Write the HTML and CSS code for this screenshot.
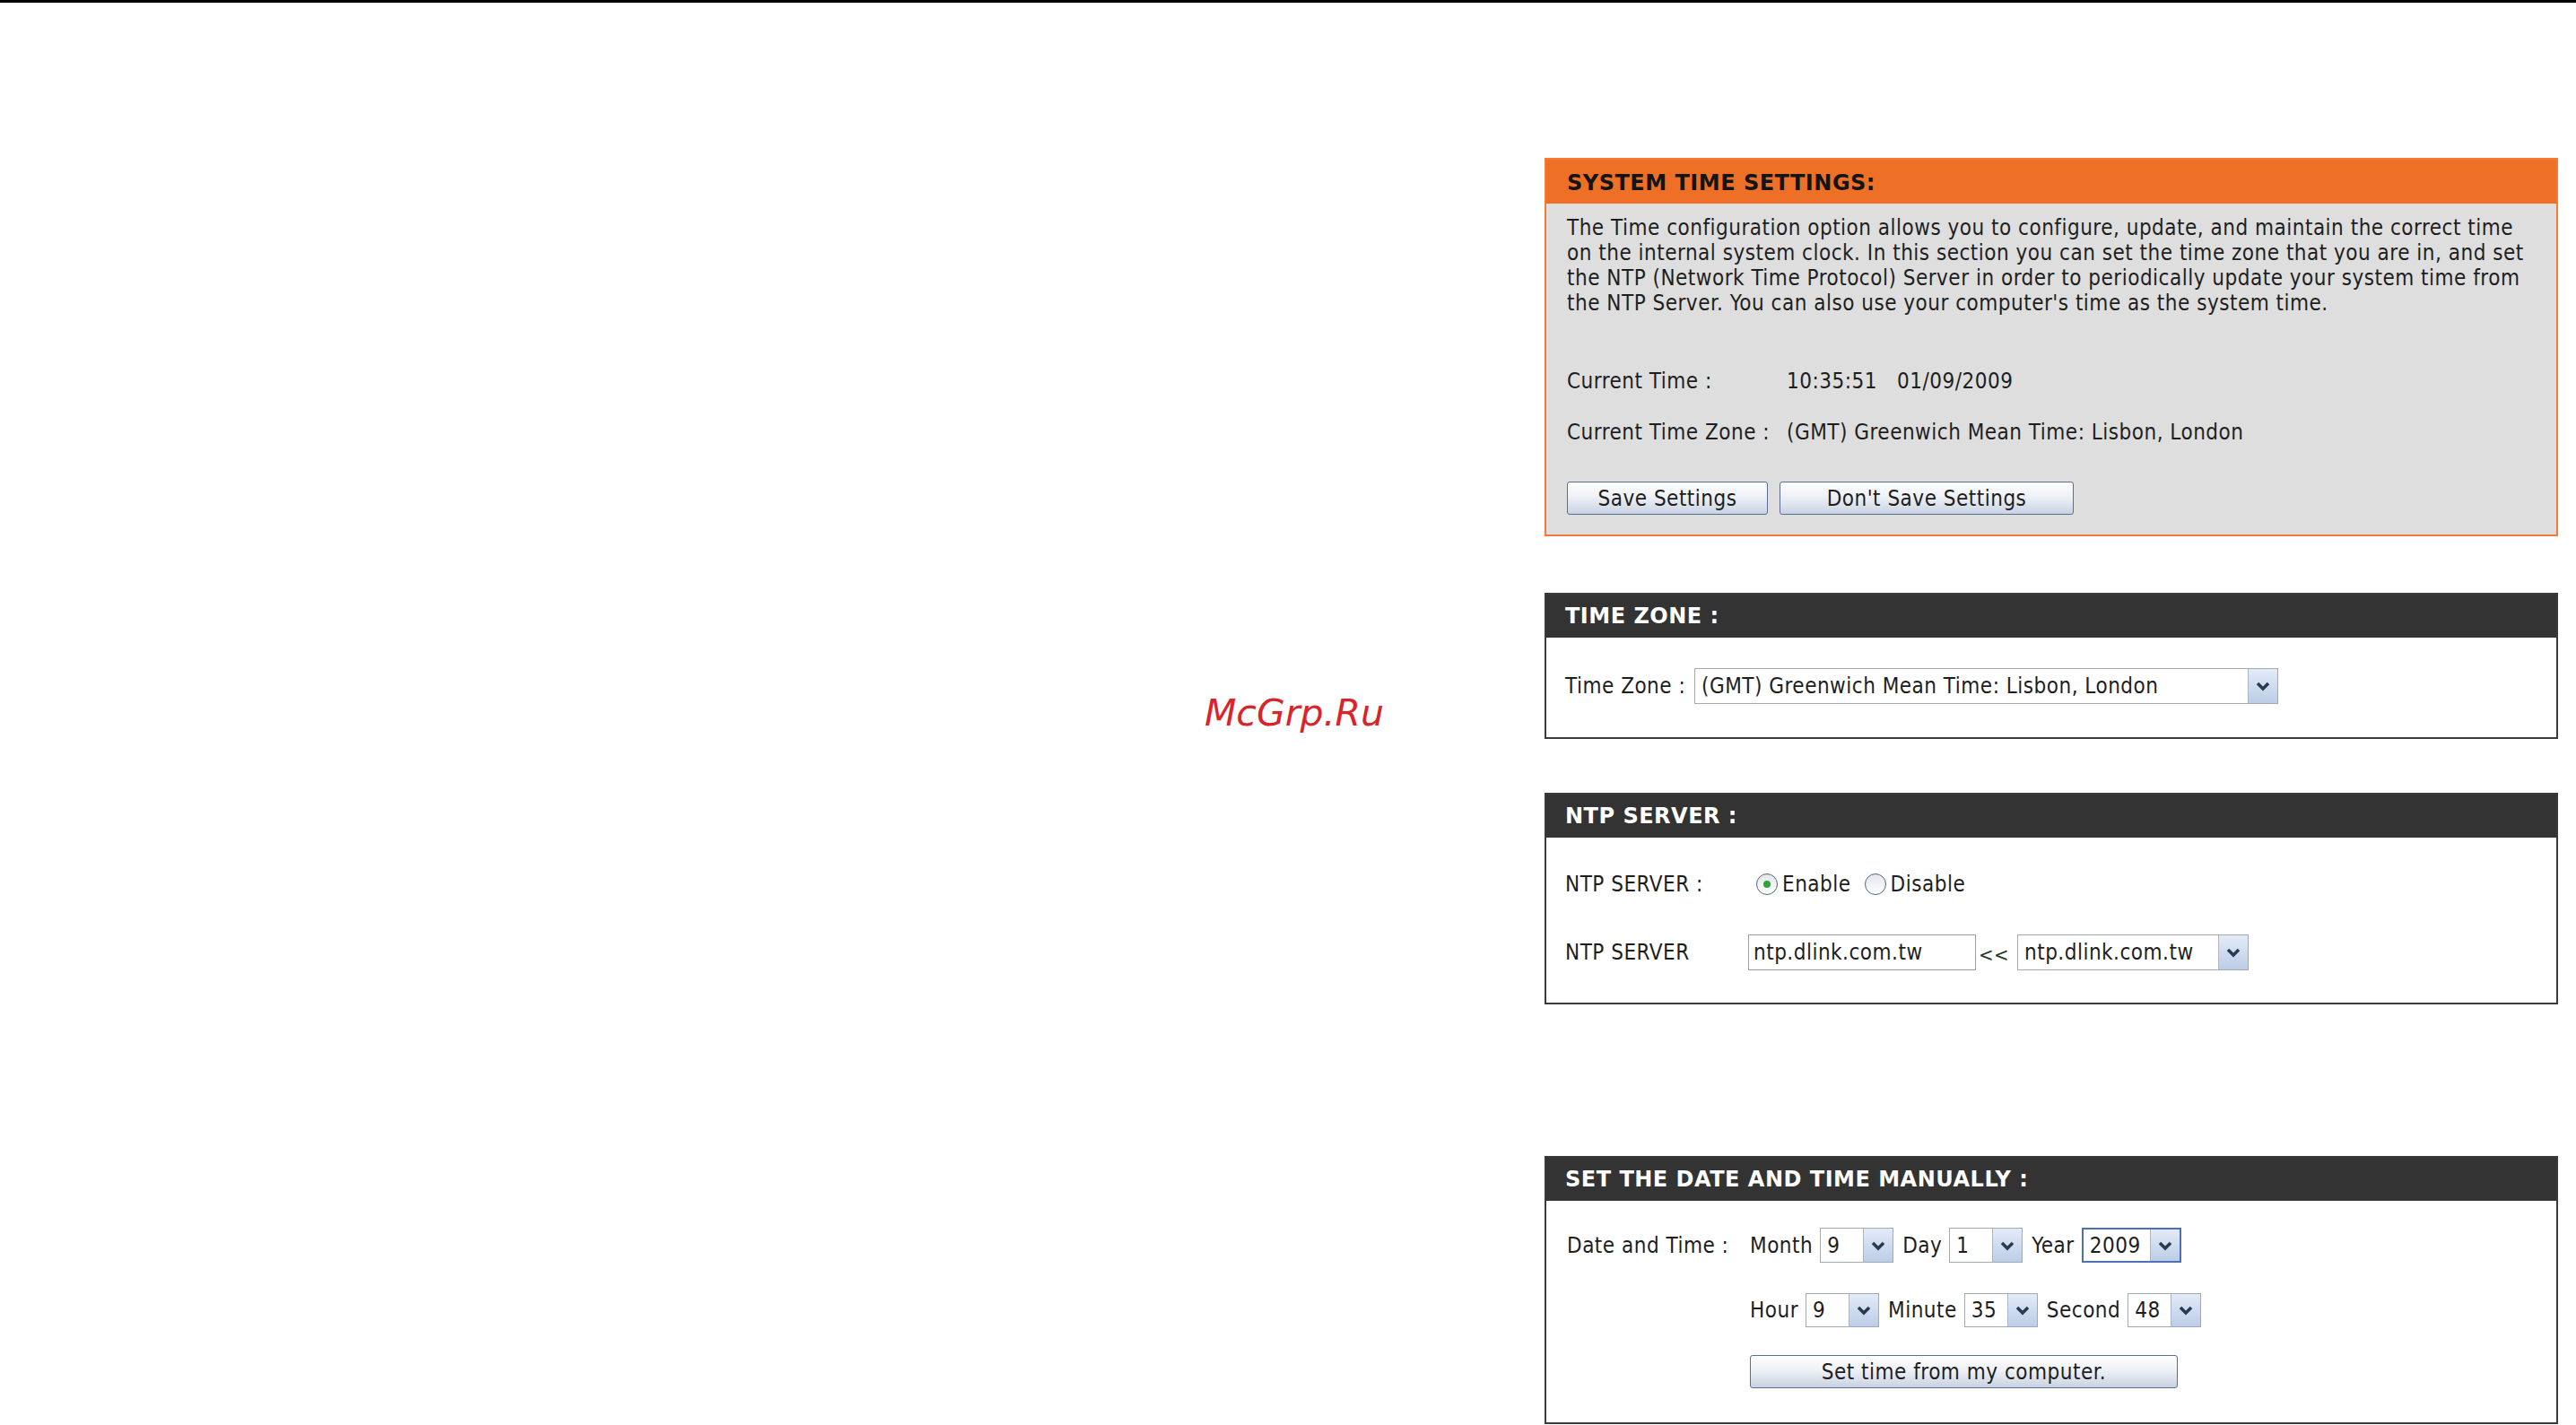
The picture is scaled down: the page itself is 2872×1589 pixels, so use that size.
FILE: index.html
```html
<!DOCTYPE html>
<html lang="en">
<head>
  <meta charset="utf-8">
  <title>System Time Settings</title>
  <link rel="stylesheet" href="styles.css">
</head>
<body>
  <div class="topline"></div>

  <div class="page">
    <!-- left blank area with watermark -->
    <div class="side">
      <span class="mark">McGrp.Ru</span>
    </div>

    <!-- settings column -->
    <div class="col">

      <section class="box box-orange">
        <div class="box-head">SYSTEM TIME SETTINGS:</div>
        <div class="box-body intro">
          <p>The Time configuration option allows you to configure, update, and maintain the correct time on the internal system clock. In this section you can set the time zone that you are in, and set the NTP (Network Time Protocol) Server in order to periodically update your system time from the NTP Server. You can also use your computer's time as the system time.</p>
          <div class="info first">
            <span class="info-label">Current Time :</span>
            <span>10:35:51&nbsp;&nbsp;&nbsp;01/09/2009</span>
          </div>
          <div class="info">
            <span class="info-label">Current Time Zone :</span>
            <span>(GMT) Greenwich Mean Time: Lisbon, London</span>
          </div>
          <div class="btn-row">
            <button class="btn btn-save">Save Settings</button>
            <button class="btn btn-nosave">Don't Save Settings</button>
          </div>
        </div>
      </section>

      <section class="box box-dark tz-box">
        <div class="box-head">TIME ZONE :</div>
        <div class="box-body tz-body">
          <div class="row">
            <span class="tz-label">Time Zone :</span>
            <div class="sel sel-tz">
              <span class="sel-val">(GMT) Greenwich Mean Time: Lisbon, London</span>
              <span class="sel-btn"><svg width="18" height="12" viewBox="0 0 18 12"><path d="M3 3 L9 9 L15 3" fill="none" stroke="#2b3954" stroke-width="3.5"/></svg></span>
            </div>
          </div>
        </div>
      </section>

      <section class="box box-dark ntp-box">
        <div class="box-head">NTP SERVER :</div>
        <div class="box-body ntp-body">
          <div class="row row-radio">
            <span class="lbl">NTP SERVER :</span>
            <span class="radio checked"></span><span class="opt">Enable</span>
            <span class="radio"></span><span class="opt">Disable</span>
          </div>
          <div class="row row-server">
            <span class="lbl">NTP SERVER</span>
            <div class="input">ntp.dlink.com.tw</div>
            <span class="arrows">&lt;&lt;</span>
            <div class="sel sel-ntp">
              <span class="sel-val">ntp.dlink.com.tw</span>
              <span class="sel-btn"><svg width="18" height="12" viewBox="0 0 18 12"><path d="M3 3 L9 9 L15 3" fill="none" stroke="#2b3954" stroke-width="3.5"/></svg></span>
            </div>
          </div>
        </div>
      </section>

      <section class="box box-dark manual-box">
        <div class="box-head">SET THE DATE AND TIME MANUALLY :</div>
        <div class="box-body manual-body">
          <div class="row row-date">
            <span class="lbl">Date and Time :</span>
            <span class="unit unit-first">Month</span>
            <div class="sel sel-sm">
              <span class="sel-val">9</span>
              <span class="sel-btn"><svg width="18" height="12" viewBox="0 0 18 12"><path d="M3 3 L9 9 L15 3" fill="none" stroke="#2b3954" stroke-width="3.5"/></svg></span>
            </div>
            <span class="unit">Day</span>
            <div class="sel sel-sm">
              <span class="sel-val">1</span>
              <span class="sel-btn"><svg width="18" height="12" viewBox="0 0 18 12"><path d="M3 3 L9 9 L15 3" fill="none" stroke="#2b3954" stroke-width="3.5"/></svg></span>
            </div>
            <span class="unit">Year</span>
            <div class="sel sel-year">
              <span class="sel-val">2009</span>
              <span class="sel-btn"><svg width="18" height="12" viewBox="0 0 18 12"><path d="M3 3 L9 9 L15 3" fill="none" stroke="#2b3954" stroke-width="3.5"/></svg></span>
            </div>
          </div>
          <div class="row row-time">
            <span class="lbl"></span>
            <span class="unit unit-first">Hour</span>
            <div class="sel sel-sm">
              <span class="sel-val">9</span>
              <span class="sel-btn"><svg width="18" height="12" viewBox="0 0 18 12"><path d="M3 3 L9 9 L15 3" fill="none" stroke="#2b3954" stroke-width="3.5"/></svg></span>
            </div>
            <span class="unit">Minute</span>
            <div class="sel sel-sm">
              <span class="sel-val">35</span>
              <span class="sel-btn"><svg width="18" height="12" viewBox="0 0 18 12"><path d="M3 3 L9 9 L15 3" fill="none" stroke="#2b3954" stroke-width="3.5"/></svg></span>
            </div>
            <span class="unit">Second</span>
            <div class="sel sel-sm">
              <span class="sel-val">48</span>
              <span class="sel-btn"><svg width="18" height="12" viewBox="0 0 18 12"><path d="M3 3 L9 9 L15 3" fill="none" stroke="#2b3954" stroke-width="3.5"/></svg></span>
            </div>
          </div>
          <div class="row row-btn">
            <span class="lbl"></span>
            <button class="btn btn-pc">Set time from my computer.</button>
          </div>
        </div>
      </section>

    </div>
  </div>
</body>
</html>
```

FILE: styles.css
```css
/* base */
* {
  box-sizing: border-box;
}
body {
  margin: 0;
  background: #fff;
  color: #1e1e1e;
  font-family: "DejaVu Sans Condensed", "DejaVu Sans", sans-serif;
  font-size: 24px;
  line-height: 28px;
  letter-spacing: 0.5px;
}
.topline {
  height: 3px;
  background: #000;
}
.page {
  display: flex;
}
/* watermark on the left */
.side {
  width: 1722px;
  padding: 772px 0 0 1343px;
}
.mark {
  font-family: "DejaVu Sans", sans-serif;
  font-style: italic;
  font-size: 41px;
  line-height: 40px;
  letter-spacing: 0;
  color: #d8252b;
}
/* column of panels */
.col {
  width: 1130px;
  padding-top: 173px;
}
.box {
  border: 2px solid #3a3a3a;
  background: #fff;
}
.box-head {
  height: 48px;
  display: flex;
  align-items: center;
  padding-left: 21px;
  font-family: "DejaVu Sans", sans-serif;
  font-weight: bold;
  font-size: 24px;
  letter-spacing: 0.5px;
}
.box-dark .box-head {
  background: #333;
  color: #fff;
}
.box-orange {
  border-color: #f27b35;
  background: #dedede;
}
.box-orange .box-head {
  height: 49px;
  background: #ee7027;
  color: #141414;
  padding-left: 23px;
  padding-top: 2px;
}
/* system time panel */
.intro {
  padding: 13px 23px 22px;
}
.intro p {
  margin: 0;
}
.info {
  display: flex;
  margin-top: 29px;
}
.info.first {
  margin-top: 59px;
}
.info-label {
  width: 245px;
}
.btn-row {
  display: flex;
  gap: 13px;
  margin-top: 41px;
}
.btn {
  height: 37px;
  border: 1px solid #5a6e96;
  border-radius: 3px;
  background: linear-gradient(#fdfdfe, #eef1f6 45%, #c9d2e2);
  font-family: inherit;
  font-size: 24px;
  letter-spacing: 0.5px;
  color: #1e1e1e;
  padding: 0;
}
.btn-save {
  width: 224px;
}
.btn-nosave {
  width: 328px;
}
/* rows inside dark panels */
.row {
  display: flex;
  align-items: center;
}
.lbl {
  width: 204px;
  flex-shrink: 0;
}
.tz-body {
  padding: 34px 21px 37px;
}
.tz-body .row {
  height: 40px;
}
.tz-label {
  width: 144px;
}
.ntp-body {
  padding: 32px 21px 36px;
}
.row-radio {
  height: 40px;
}
.row-server {
  height: 40px;
  margin-top: 36px;
}
.manual-body {
  padding: 30px 21px 38px 23px;
}
.row-date {
  height: 39px;
}
.row-time {
  height: 38px;
  margin-top: 34px;
}
.row-btn {
  margin-top: 31px;
}
.btn-pc {
  width: 477px;
}
/* fake select boxes */
.sel {
  display: flex;
  height: 100%;
  border: 1px solid #a3a9b2;
  background: #fff;
}
.sel-val {
  flex: 1;
  padding-left: 7px;
  display: flex;
  align-items: center;
  white-space: nowrap;
  overflow: hidden;
}
.sel-btn {
  width: 33px;
  display: flex;
  align-items: center;
  justify-content: center;
  border-left: 1px solid #a7b6cf;
  background: linear-gradient(#e3ebf7, #bccde7);
}
.sel-tz {
  width: 651px;
}
.sel-ntp {
  width: 258px;
}
.sel-sm {
  width: 82px;
}
.sel-year {
  width: 111px;
  border: 2px solid #4d6fb8;
}
.unit {
  margin: 0 8px 0 10px;
}
.unit-first {
  margin-left: 0;
}
/* ntp inputs */
.radio {
  width: 24px;
  height: 24px;
  border-radius: 50%;
  border: 1px solid #52637e;
  background: linear-gradient(#e4e6ea, #fff);
  display: flex;
  align-items: center;
  justify-content: center;
  margin: 0 5px 0 9px;
}
.radio.checked::after {
  content: "";
  width: 8px;
  height: 8px;
  border-radius: 50%;
  background: #2fa43a;
}
.opt {
  margin-right: 6px;
}
.input {
  width: 254px;
  height: 40px;
  border: 1px solid #9a9a9a;
  padding-left: 5px;
  display: flex;
  align-items: center;
}
.arrows {
  width: 46px;
  padding-left: 3px;
  color: #243a2c;
  font-size: 22px;
  padding-top: 6px;
}
/* gaps between panels */
.tz-box {
  margin-top: 63px;
}
.ntp-box {
  margin-top: 60px;
}
.manual-box {
  margin-top: 169px;
}
```
